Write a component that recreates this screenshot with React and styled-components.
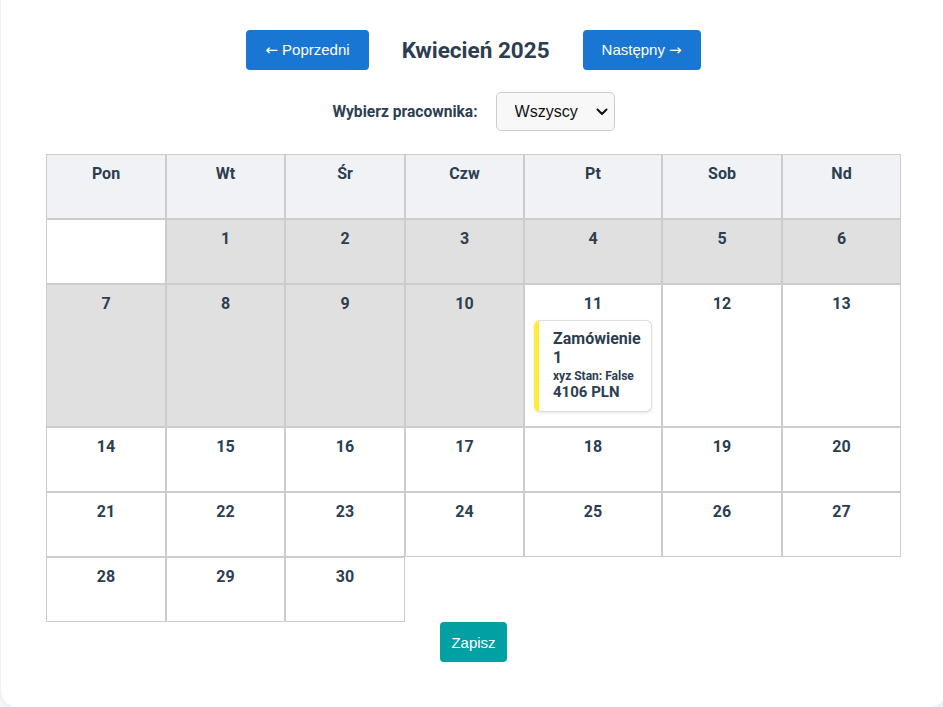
import React, { useState } from "react";
import styled, { createGlobalStyle } from "styled-components";

const GlobalStyle = createGlobalStyle`
  html, body {
    margin: 0;
    background: #f4f5f7;
    overflow: hidden;
  }
  body {
    font-family: "Liberation Sans", Arial, sans-serif;
  }
`;

const weekDays = ["Pon", "Wt", "Śr", "Czw", "Pt", "Sob", "Nd"];
const colWidths = [120, 119, 120, 119, 138, 120, 119];
const today = 11;

// kwiecień 2025 zaczyna się we wtorek
const weeks = [
  [null, 1, 2, 3, 4, 5, 6],
  [7, 8, 9, 10, 11, 12, 13],
  [14, 15, 16, 17, 18, 19, 20],
  [21, 22, 23, 24, 25, 26, 27],
  [28, 29, 30],
];

const orders = {
  11: [{ id: 1, title: "Zamówienie 1", info: "xyz Stan: False", price: "4106 PLN" }],
};

const App = () => {
  const [worker, setWorker] = useState("all");
  return (
    <>
      <GlobalStyle />
      <Page>
        <Card>
          <Header>
            <NavButton>
              <Arrow>←</Arrow> Poprzedni
            </NavButton>
            <Title>Kwiecień 2025</Title>
            <NavButton>
              Następny <Arrow>→</Arrow>
            </NavButton>
          </Header>
          <FilterRow>
            <Label htmlFor="worker">Wybierz pracownika:</Label>
            <SelectWrap>
              <Select id="worker" value={worker} onChange={(e) => setWorker(e.target.value)}>
                <option value="all">Wszyscy</option>
              </Select>
              <Chevron viewBox="0 0 12 8">
                <path d="M1.5 1.5 6 6l4.5-4.5" fill="none" stroke="#111" strokeWidth="2" strokeLinecap="round" strokeLinejoin="round" />
              </Chevron>
            </SelectWrap>
          </FilterRow>
          <Table>
            <colgroup>
              {colWidths.map((w, i) => (
                <col key={i} style={{ width: w }} />
              ))}
            </colgroup>
            <thead>
              <tr>
                {weekDays.map((d) => (
                  <HeadCell key={d}>
                    <CellInner>{d}</CellInner>
                  </HeadCell>
                ))}
              </tr>
            </thead>
            <tbody>
              {weeks.map((week, wi) => (
                <tr key={wi}>
                  {week.map((day, di) => (
                    <DayCell key={di} $past={day !== null && day < today}>
                      <CellInner>
                        {day && <DayNum>{day}</DayNum>}
                        {day &&
                          (orders[day] || []).map((o) => (
                            <Order key={o.id}>
                              <OrderTitle>{o.title}</OrderTitle>
                              <OrderInfo>{o.info}</OrderInfo>
                              <OrderPrice>{o.price}</OrderPrice>
                            </Order>
                          ))}
                      </CellInner>
                    </DayCell>
                  ))}
                </tr>
              ))}
            </tbody>
          </Table>
          <Footer>
            <SaveButton>Zapisz</SaveButton>
          </Footer>
        </Card>
      </Page>
    </>
  );
};

export default App;

const Page = styled.div`
  padding: 0 0 1px 1px;
`;

const Card = styled.div`
  width: 945px;
  box-sizing: border-box;
  background: #fff;
  border-radius: 0 0 16px 16px;
  box-shadow: 0 1px 4px rgba(0, 0, 0, 0.06);
  padding: 30px 45px 45px;
`;

const Header = styled.div`
  display: flex;
  justify-content: center;
  align-items: center;
  gap: 33px;
`;

const NavButton = styled.button`
  height: 40px;
  padding: 0 19px;
  border: none;
  border-radius: 4px;
  background: #1976d2;
  color: #fff;
  font-family: "Liberation Sans", Arial, sans-serif;
  font-size: 15px;
  cursor: pointer;
`;

const Arrow = styled.span`
  font-family: "DejaVu Sans", sans-serif;
  font-size: 15px;
`;

const Title = styled.h2`
  margin: 0;
  font-family: Roboto, sans-serif;
  font-weight: 700;
  font-size: 22.5px;
  color: #2c3e50;
`;

const FilterRow = styled.div`
  display: flex;
  justify-content: center;
  align-items: center;
  gap: 18px;
  margin-top: 22px;
`;

const Label = styled.label`
  font-family: Roboto, sans-serif;
  font-weight: 700;
  font-size: 15.6px;
  color: #2c3e50;
`;

const SelectWrap = styled.div`
  position: relative;
`;

const Select = styled.select`
  appearance: none;
  width: 119px;
  height: 39px;
  padding: 0 30px 0 18px;
  border: 1px solid #ccc;
  border-radius: 5px;
  background: #f8f8f8;
  font-family: "Liberation Sans", Arial, sans-serif;
  font-size: 16px;
  color: #111;
`;

const Chevron = styled.svg`
  position: absolute;
  right: 7px;
  top: 16px;
  width: 12px;
  height: 8px;
  pointer-events: none;
`;

const Table = styled.table`
  width: 855px;
  margin-top: 23px;
  border-collapse: separate;
  border-spacing: 0;
  table-layout: fixed;
`;

const HeadCell = styled.th`
  border: 1px solid #ccc;
  background: #f0f2f5;
  padding: 9px 9px 7px;
  vertical-align: top;
  font-family: Roboto, sans-serif;
  font-weight: 700;
  font-size: 16px;
  color: #2c3e50;
`;

const DayCell = styled.td`
  border: 1px solid #ccc;
  background: ${({ $past }) => ($past ? "#e0e0e0" : "#fff")};
  padding: 9px 9px 7px;
  vertical-align: top;
  text-align: center;
  font-family: Roboto, sans-serif;
  color: #2c3e50;
`;

const CellInner = styled.div`
  min-height: 47px;
  line-height: 19px;
`;

const DayNum = styled.div`
  font-weight: 700;
  font-size: 16px;
`;

const Order = styled.div`
  margin: 7px 0 7px;
  padding: 8px 8px 10px 14px;
  text-align: left;
  background: #fff;
  border: 1px solid #ddd;
  border-left: 5px solid #ffeb3b;
  border-radius: 6px;
  box-shadow: 0 1px 3px rgba(0, 0, 0, 0.1);
  font-weight: 700;
`;

const OrderTitle = styled.div`
  font-size: 16px;
  line-height: 19px;
`;

const OrderInfo = styled.div`
  font-size: 12px;
  line-height: 15px;
  margin-top: 2px;
`;

const OrderPrice = styled.div`
  font-size: 15px;
  line-height: 17px;
`;

const Footer = styled.div`
  display: flex;
  justify-content: center;
`;

const SaveButton = styled.button`
  height: 40px;
  padding: 0 11px;
  border: none;
  border-radius: 4px;
  background: #00a0a3;
  color: #fff;
  font-family: "Liberation Sans", Arial, sans-serif;
  font-size: 15px;
  cursor: pointer;
`;
